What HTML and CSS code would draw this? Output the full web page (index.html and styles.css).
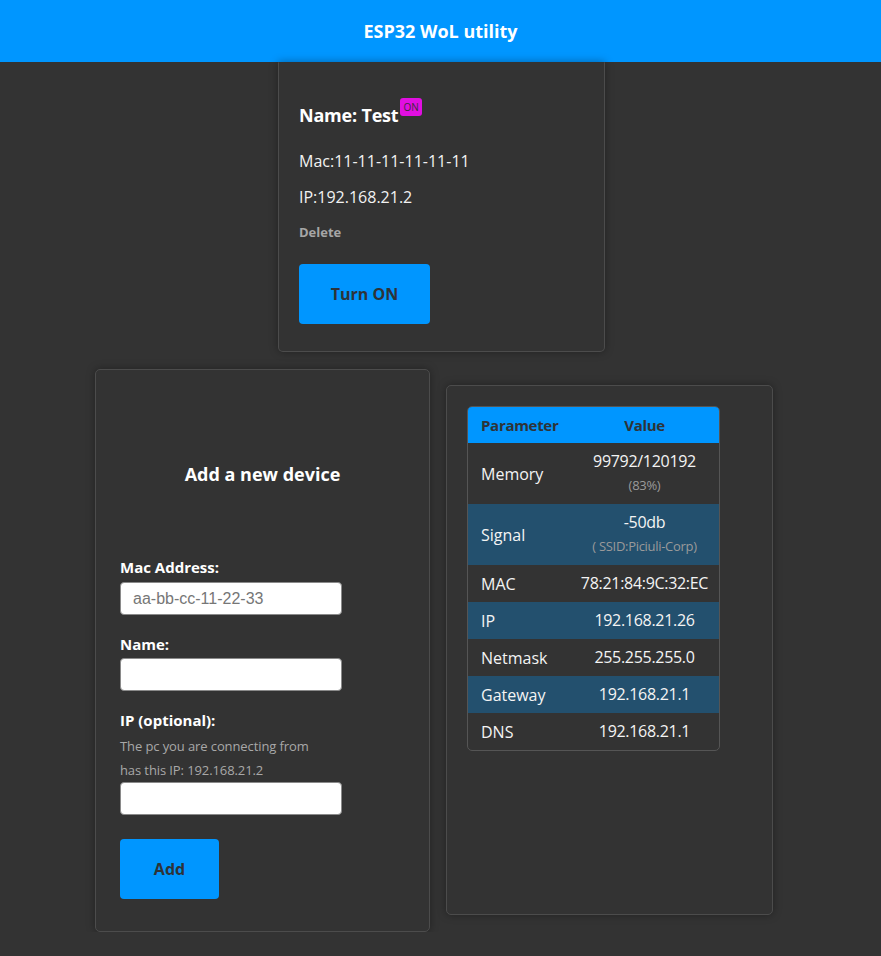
FILE: index.html
```html
<!DOCTYPE html>
<html lang="en">
<head>
<meta charset="utf-8">
<title>ESP32 WoL utility</title>
<link rel="stylesheet" href="styles.css">
</head>
<body>
<header class="topbar">ESP32 WoL utility</header>
<main class="page">
  <section class="card device-card">
    <h3 class="device-name">Name: Test<span class="badge">ON</span></h3>
    <p class="device-line mac-line">Mac:11-11-11-11-11-11</p>
    <p class="device-line ip-line">IP:192.168.21.2</p>
    <p class="delete-link">Delete</p>
    <button class="btn btn-turn">Turn ON</button>
  </section>

  <div class="row">
    <section class="card add-card">
      <h2 class="add-title">Add a new device</h2>
      <label class="field-label label-mac">Mac Address:</label>
      <input class="field-input" type="text" placeholder="aa-bb-cc-11-22-33">
      <label class="field-label label-gap">Name:</label>
      <input class="field-input" type="text">
      <label class="field-label label-gap">IP (optional):</label>
      <p class="hint">The pc you are connecting from<br>has this IP: 192.168.21.2</p>
      <input class="field-input" type="text">
      <button class="btn btn-add">Add</button>
    </section>

    <section class="card info-card">
      <div class="table-wrap">
        <table class="info-table">
          <colgroup><col class="col-param"><col class="col-value"></colgroup>
          <thead>
            <tr><th class="th-param">Parameter</th><th class="th-value">Value</th></tr>
          </thead>
          <tbody>
            <tr class="tall"><td>Memory</td><td class="val"><div class="main-val">99792/120192</div><div class="sub-val">(83%)</div></td></tr>
            <tr class="alt tall"><td>Signal</td><td class="val"><div class="main-val">-50db</div><div class="sub-val">( SSID:Piciuli-Corp)</div></td></tr>
            <tr><td>MAC</td><td class="val">78:21:84:9C:32:EC</td></tr>
            <tr class="alt"><td>IP</td><td class="val">192.168.21.26</td></tr>
            <tr><td>Netmask</td><td class="val">255.255.255.0</td></tr>
            <tr class="alt"><td>Gateway</td><td class="val">192.168.21.1</td></tr>
            <tr><td>DNS</td><td class="val">192.168.21.1</td></tr>
          </tbody>
        </table>
      </div>
    </section>
  </div>
</main>
</body>
</html>
```

FILE: styles.css
```css
* { box-sizing: border-box; }

html, body {
  margin: 0;
  padding: 0;
  background: #333333;
  color: #f2f2f2;
  font-family: "Open Sans", "Noto Sans", "DejaVu Sans", sans-serif;
}

.topbar {
  height: 62px;
  background: #0096ff;
  color: #ffffff;
  font-weight: 700;
  font-size: 18px;
  display: flex;
  align-items: center;
  justify-content: center;
}

.page {
  display: flex;
  flex-direction: column;
  align-items: center;
}

.card {
  background: #333333;
  border: 1px solid #4c4c4c;
  border-radius: 5px;
  box-shadow: 0 0 8px rgba(0, 0, 0, 0.35);
}

/* Device card */
.device-card {
  width: 327px;
  padding: 40px 20px 27px;
  margin-left: 2px;
  border-top-color: transparent;
  border-top-left-radius: 0;
  border-top-right-radius: 0;
}

.device-name {
  margin: 0;
  font-size: 18px;
  line-height: 24px;
  font-weight: 700;
  color: #ffffff;
  letter-spacing: -0.2px;
}

.badge {
  position: relative;
  top: -5px;
  display: inline-block;
  margin-left: 2px;
  background: #e10fe1;
  color: #3a2a3a;
  font-size: 10px;
  font-weight: 400;
  letter-spacing: 0;
  line-height: 18px;
  height: 18px;
  padding: 0 3px;
  border-radius: 3px;
  vertical-align: top;
}

.device-line {
  margin: 0;
  font-size: 16px;
  line-height: 21px;
}

.mac-line { margin-top: 24px; }
.ip-line { margin-top: 15px; }

.delete-link {
  margin: 16px 0 0;
  font-size: 13px;
  line-height: 17px;
  font-weight: 700;
  color: #a6a6a6;
}

.btn {
  display: block;
  height: 60px;
  border: none;
  border-radius: 4px;
  background: #0096ff;
  color: #2e3338;
  font-family: inherit;
  font-size: 16px;
  font-weight: 700;
  cursor: pointer;
}

.btn-turn {
  width: 131px;
  margin-top: 23px;
}

/* Row */
.row {
  display: flex;
  align-items: stretch;
  justify-content: center;
  gap: 16px;
  margin-top: 17px;
  padding-right: 13px;
  width: 100%;
}

.add-card {
  width: 335px;
  padding: 0 24px 32px;
  display: flex;
  flex-direction: column;
  align-items: flex-start;
}

.add-title {
  align-self: stretch;
  text-align: center;
  margin: 92px 0 0;
  font-size: 18px;
  line-height: 24px;
  font-weight: 700;
  color: #ffffff;
}

.field-label {
  display: block;
  font-size: 15px;
  line-height: 20px;
  font-weight: 700;
  color: #ffffff;
}

.label-mac { margin-top: 71px; }
.label-gap { margin-top: 19px; }

.field-input {
  display: block;
  width: 222px;
  height: 33px;
  margin-top: 4px;
  padding: 0 12px;
  border: 1px solid #8a8a8a;
  border-radius: 4px;
  background: #ffffff;
  font-family: "Liberation Sans", Arial, sans-serif;
  font-size: 16px;
  color: #222;
}

.label-mac + .field-input { margin-top: 5px; }

.field-input::placeholder { color: #767676; }

.hint {
  margin: 4px 0 0;
  font-size: 13px;
  line-height: 24px;
  color: #a8a8a8;
  letter-spacing: -0.1px;
}

.hint + .field-input { margin-top: 0; }

.btn-add {
  width: 99px;
  margin-top: 24px;
}

/* Info card */
.info-card {
  width: 327px;
  margin: 16px 0 17px;
  padding: 20px;
}

.table-wrap {
  width: 253px;
  border: 1px solid #555555;
  border-radius: 5px;
  overflow: hidden;
}

.info-table {
  width: 100%;
  border-collapse: collapse;
  table-layout: fixed;
  font-size: 16px;
}

.col-param { width: 100px; }

.info-table th {
  background: #0096ff;
  color: #2e3338;
  font-size: 15px;
  font-weight: 700;
  height: 36px;
  padding: 0 13px;
  letter-spacing: -0.3px;
}

.th-param { text-align: left; }
.th-value { text-align: center; padding-left: 15px !important; }

.info-table td {
  height: 37px;
  padding: 0 13px;
  line-height: 21px;
  color: #f4f4f4;
}

.info-table tr td:first-child { padding-top: 1px; }

.info-table td.val {
  text-align: center;
  padding: 0 4px 0 6px;
  letter-spacing: -0.3px;
}

.info-table tr.alt td { background: #23506e; }

.info-table tr.tall td { height: 61px; }

.main-val { line-height: 24px; }

.sub-val {
  font-size: 13px;
  line-height: 25px;
  color: #9a9a9a;
}
```
